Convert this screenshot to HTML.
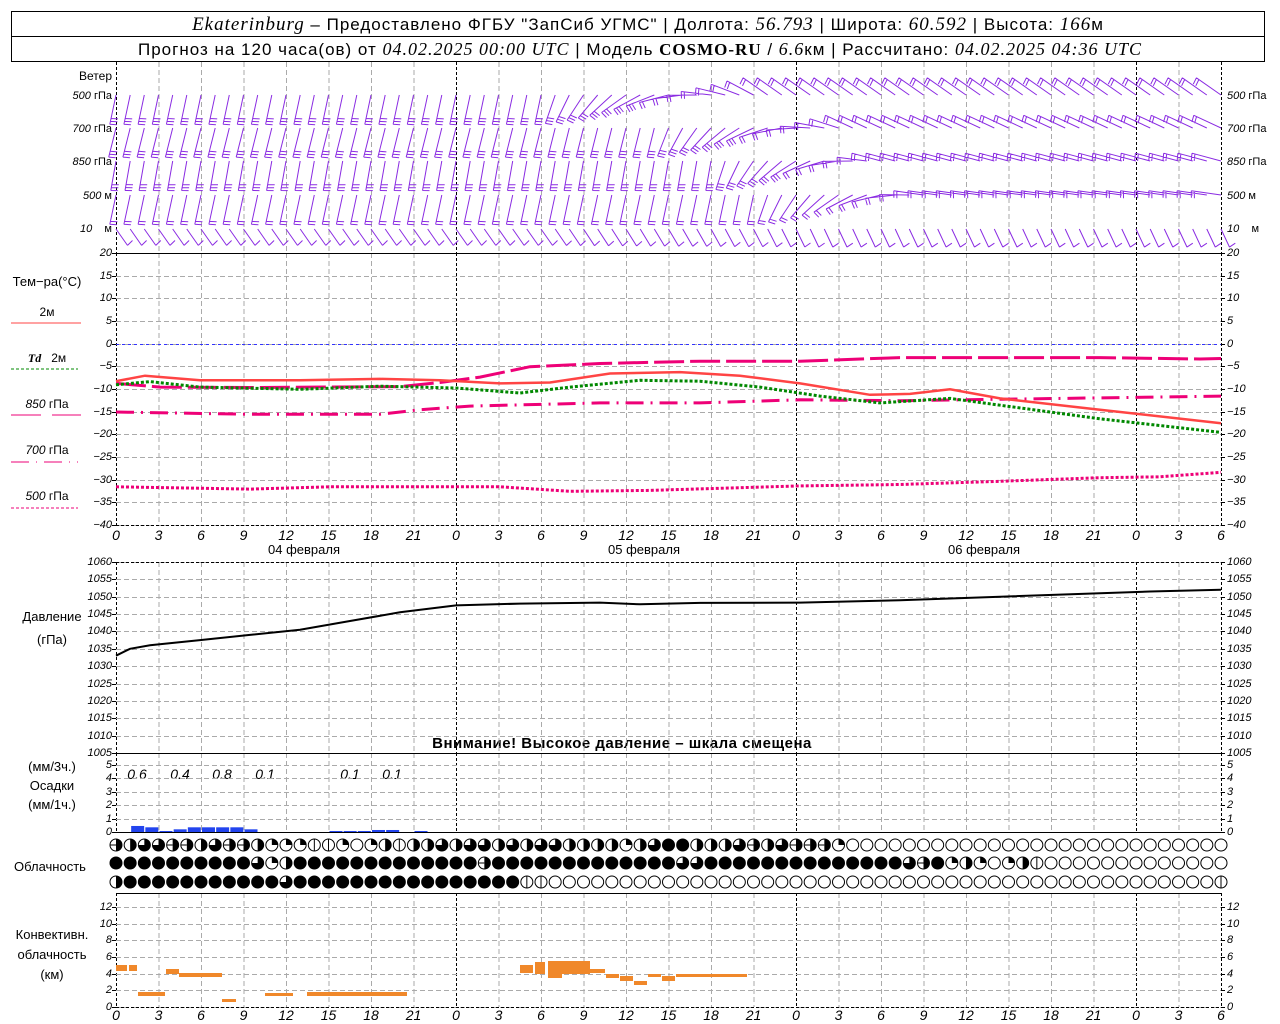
<!DOCTYPE html>
<html><head><meta charset="utf-8"><style>
html,body{margin:0;padding:0;background:#fff;width:1280px;height:1024px;overflow:hidden}
svg{display:block}
text{font-family:"Liberation Sans","DejaVu Sans",sans-serif;fill:#000}
.n{font-size:11px;font-style:italic}
.h{font-size:14px;font-style:italic}
.l{font-size:11px}
.hd{font-size:17px}
.it{font-style:italic;font-family:"Liberation Serif",serif}
</style></head><body>
<svg id="s" width="1280" height="1024" viewBox="0 0 1280 1024" xmlns="http://www.w3.org/2000/svg">
<rect x="11.5" y="11.5" width="1253" height="50" fill="none" stroke="#000"/>
<line x1="11" y1="36.5" x2="1265" y2="36.5" stroke="#000"/>
<text class="hd" x="648" y="30" text-anchor="middle" letter-spacing="1"><tspan class="it" font-size="19">Ekaterinburg</tspan> – Предоставлено ФГБУ "ЗапСиб УГМС" | Долгота: <tspan class="it" font-size="19">56.793</tspan> | Широта: <tspan class="it" font-size="19">60.592</tspan> | Высота: <tspan class="it" font-size="19">166</tspan>м</text>
<text class="hd" x="640" y="55" text-anchor="middle" font-size="16" letter-spacing="1">Прогноз на 120 часа(ов) от <tspan class="it" font-size="18">04.02.2025 00:00 UTC</tspan> | Модель <tspan font-weight="bold" font-family="Liberation Serif">COSMO-RU</tspan> / <tspan class="it" font-size="18">6.6</tspan>км | Рассчитано: <tspan class="it" font-size="18">04.02.2025 04:36 UTC</tspan></text>

<g class="l" text-anchor="end">
<text x="112" y="80" font-size="12">Ветер</text>
<text x="112" y="99"><tspan font-style="italic">500</tspan> гПа</text>
<text x="112" y="132"><tspan font-style="italic">700</tspan> гПа</text>
<text x="112" y="165"><tspan font-style="italic">850</tspan> гПа</text>
<text x="112" y="199"><tspan font-style="italic">500</tspan> м</text>
<text x="112" y="232"><tspan font-style="italic">10</tspan>&#160;&#160;&#160; м</text>
</g>
<g class="l">
<text x="1227" y="99"><tspan font-style="italic">500</tspan> гПа</text>
<text x="1227" y="132"><tspan font-style="italic">700</tspan> гПа</text>
<text x="1227" y="165"><tspan font-style="italic">850</tspan> гПа</text>
<text x="1227" y="199"><tspan font-style="italic">500</tspan> м</text>
<text x="1227" y="232"><tspan font-style="italic">10</tspan>&#160;&#160;&#160; м</text>
</g>
<g text-anchor="middle" font-size="13">
<text x="47" y="286">Тем−ра(°C)</text>
<text x="47" y="316" font-size="12">2м</text>
<text x="47" y="362" font-size="12"><tspan font-style="italic" font-weight="bold" font-family="Liberation Serif">Td</tspan>&#160;&#160; 2м</text>
<text x="47" y="408" font-size="12"><tspan font-style="italic">850</tspan> гПа</text>
<text x="47" y="454" font-size="12"><tspan font-style="italic">700</tspan> гПа</text>
<text x="47" y="500" font-size="12"><tspan font-style="italic">500</tspan> гПа</text>
<text x="52" y="621">Давление</text>
<text x="52" y="644">(гПа)</text>
<text x="52" y="771">(мм/3ч.)</text>
<text x="52" y="790">Осадки</text>
<text x="52" y="809">(мм/1ч.)</text>
<text x="50" y="871">Облачность</text>
<text x="52" y="939">Конвективн.</text>
<text x="52" y="959">облачность</text>
<text x="52" y="979">(км)</text>
<text x="304" y="554">04 февраля</text>
<text x="644" y="554">05 февраля</text>
<text x="984" y="554">06 февраля</text>
</g>
<line x1="11" y1="323" x2="81" y2="323" stroke="#f44" stroke-width="1"/>
<line x1="11" y1="369" x2="78" y2="369" stroke="#080" stroke-dasharray="3,2"/>
<line x1="11" y1="415" x2="41" y2="415" stroke="#e07"/><line x1="52" y1="415" x2="81" y2="415" stroke="#e07"/>
<line x1="11" y1="462" x2="78" y2="462" stroke="#e07" stroke-dasharray="18,7,1,7"/>
<line x1="11" y1="508" x2="78" y2="508" stroke="#e07" stroke-dasharray="3,2"/>
<text x="622" y="748" text-anchor="middle" font-size="15" font-weight="bold" letter-spacing="0.5">Внимание! Высокое давление – шкала смещена</text>
<g class="h" text-anchor="middle">
<text x="137" y="779">0.6</text><text x="180" y="779">0.4</text><text x="222" y="779">0.8</text><text x="265" y="779">0.1</text><text x="350" y="779">0.1</text><text x="392" y="779">0.1</text>
</g>
<g class="h" text-anchor="middle">
<text x="116" y="540">0</text><text x="158.5" y="540">3</text><text x="201" y="540">6</text><text x="243.5" y="540">9</text><text x="286" y="540">12</text><text x="328.5" y="540">15</text><text x="371" y="540">18</text><text x="413.5" y="540">21</text><text x="456" y="540">0</text><text x="498.5" y="540">3</text><text x="541" y="540">6</text><text x="583.5" y="540">9</text><text x="626" y="540">12</text><text x="668.5" y="540">15</text><text x="711" y="540">18</text><text x="753.5" y="540">21</text><text x="796" y="540">0</text><text x="838.5" y="540">3</text><text x="881" y="540">6</text><text x="923.5" y="540">9</text><text x="966" y="540">12</text><text x="1008.5" y="540">15</text><text x="1051" y="540">18</text><text x="1093.5" y="540">21</text><text x="1136" y="540">0</text><text x="1178.5" y="540">3</text><text x="1221" y="540">6</text>
<text x="116" y="1020">0</text><text x="158.5" y="1020">3</text><text x="201" y="1020">6</text><text x="243.5" y="1020">9</text><text x="286" y="1020">12</text><text x="328.5" y="1020">15</text><text x="371" y="1020">18</text><text x="413.5" y="1020">21</text><text x="456" y="1020">0</text><text x="498.5" y="1020">3</text><text x="541" y="1020">6</text><text x="583.5" y="1020">9</text><text x="626" y="1020">12</text><text x="668.5" y="1020">15</text><text x="711" y="1020">18</text><text x="753.5" y="1020">21</text><text x="796" y="1020">0</text><text x="838.5" y="1020">3</text><text x="881" y="1020">6</text><text x="923.5" y="1020">9</text><text x="966" y="1020">12</text><text x="1008.5" y="1020">15</text><text x="1051" y="1020">18</text><text x="1093.5" y="1020">21</text><text x="1136" y="1020">0</text><text x="1178.5" y="1020">3</text><text x="1221" y="1020">6</text>
</g>
<g class="n" text-anchor="end" dominant-baseline="middle">
<text x="112" y="253">20</text><text x="112" y="276">15</text><text x="112" y="298">10</text><text x="112" y="321">5</text><text x="112" y="344">0</text><text x="112" y="366">−5</text><text x="112" y="389">−10</text><text x="112" y="412">−15</text><text x="112" y="434">−20</text><text x="112" y="457">−25</text><text x="112" y="480">−30</text><text x="112" y="502">−35</text><text x="112" y="525">−40</text>
<text x="112" y="562">1060</text><text x="112" y="579">1055</text><text x="112" y="597">1050</text><text x="112" y="614">1045</text><text x="112" y="631">1040</text><text x="112" y="649">1035</text><text x="112" y="666">1030</text><text x="112" y="684">1025</text><text x="112" y="701">1020</text><text x="112" y="718">1015</text><text x="112" y="736">1010</text><text x="112" y="753">1005</text>
<text x="112" y="765">5</text><text x="112" y="778">4</text><text x="112" y="792">3</text><text x="112" y="805">2</text><text x="112" y="819">1</text><text x="112" y="832">0</text>
<text x="112" y="907">12</text><text x="112" y="924">10</text><text x="112" y="940">8</text><text x="112" y="957">6</text><text x="112" y="974">4</text><text x="112" y="990">2</text><text x="112" y="1007">0</text>
</g>
<g class="n" dominant-baseline="middle">
<text x="1227" y="253">20</text><text x="1227" y="276">15</text><text x="1227" y="298">10</text><text x="1227" y="321">5</text><text x="1227" y="344">0</text><text x="1227" y="366">−5</text><text x="1227" y="389">−10</text><text x="1227" y="412">−15</text><text x="1227" y="434">−20</text><text x="1227" y="457">−25</text><text x="1227" y="480">−30</text><text x="1227" y="502">−35</text><text x="1227" y="525">−40</text>
<text x="1227" y="562">1060</text><text x="1227" y="579">1055</text><text x="1227" y="597">1050</text><text x="1227" y="614">1045</text><text x="1227" y="631">1040</text><text x="1227" y="649">1035</text><text x="1227" y="666">1030</text><text x="1227" y="684">1025</text><text x="1227" y="701">1020</text><text x="1227" y="718">1015</text><text x="1227" y="736">1010</text><text x="1227" y="753">1005</text>
<text x="1227" y="765">5</text><text x="1227" y="778">4</text><text x="1227" y="792">3</text><text x="1227" y="805">2</text><text x="1227" y="819">1</text><text x="1227" y="832">0</text>
<text x="1227" y="907">12</text><text x="1227" y="924">10</text><text x="1227" y="940">8</text><text x="1227" y="957">6</text><text x="1227" y="974">4</text><text x="1227" y="990">2</text><text x="1227" y="1007">0</text>
</g>
<g id="g"></g>
</svg>
<script>
(function(){
var NS="http://www.w3.org/2000/svg",G=document.getElementById("g");
function el(t,a){var e=document.createElementNS(NS,t);for(var k in a)e.setAttribute(k,a[k]);G.appendChild(e);return e;}
function X(h){return 116+h*14.1667;}
function line(x1,y1,x2,y2,st,w,da){var a={x1:x1,y1:y1,x2:x2,y2:y2,stroke:st,"stroke-width":w||1};if(da)a["stroke-dasharray"]=da;return el("line",a);}
var GR="#aaa",DA="5,3";
for(var k=0;k<=26;k++){var x=X(3*k)+0.5,day=(k%8==0)||k==26;
 var sp=[[62,253],[253,525],[562,753],[753,832],[893,1007]];
 sp.forEach(function(s){line(x,s[0],x,s[1],day?"#000":GR,1,day?"3,2":DA);});
}
function hg(y0,y1,n){for(var i=0;i<=n;i++){var y=Math.round(y0+(y1-y0)*i/n)+0.5;line(116,y,1221,y,GR,1,DA);line(112,y,116,y,"#000");line(1221,y,1225,y,"#000");}}
hg(253,525,12);hg(562,753,11);hg(765,832,5);hg(907,1007,6);
line(116,344.5,1221,344.5,"#33f",1,"3,3");
line(116,253.5,1221,253.5,"#000");line(116,525.5,1221,525.5,"#000",1,"3,2");
line(116,562.5,1221,562.5,"#000",1,"3,2");line(116,753.5,1221,753.5,"#000");
line(116,832.5,1221,832.5,"#000");line(116,893.5,1221,893.5,"#000");line(116,1007.5,1221,1007.5,"#000",1,"3,2");
function curve(pts,fy,col,w,da){var d="";pts.forEach(function(p,i){d+=(i?"L":"M")+p[0]+","+fy(p[1]);});var a={d:d,fill:"none",stroke:col,"stroke-width":w};if(da)a["stroke-dasharray"]=da;el("path",a);}
function TY(v){return (344-v*4.533).toFixed(1);}
curve([[116,-31.5],[250,-32],[330,-31.5],[500,-31.5],[570,-32.5],[650,-32.3],[800,-31.3],[900,-31],[1000,-30.3],[1100,-29.5],[1160,-29.3],[1221,-28.3]],TY,"#e07",3,"3,2");
curve([[116,-15],[250,-15.5],[380,-15.5],[420,-14.5],[470,-13.7],[600,-13],[700,-13],[800,-12.3],[900,-12.5],[1000,-12.2],[1221,-11.5]],TY,"#e07",3,"18,7,2,7");
curve([[116,-8.7],[160,-9.5],[250,-9.6],[400,-9.4],[440,-8.5],[480,-7.3],[530,-5],[600,-4.3],[700,-3.8],[800,-3.8],[900,-3],[1000,-3],[1100,-3],[1200,-3.3],[1221,-3.2]],TY,"#e07",3,"30,6");
curve([[116,-9],[150,-8.3],[200,-9.5],[300,-10],[380,-9.3],[456,-9.7],[520,-10.8],[570,-9.5],[640,-8],[700,-8.2],[760,-9.5],[820,-11.5],[880,-13],[950,-12],[1000,-13.5],[1100,-16.5],[1221,-19.5]],TY,"#080",3,"3,2");
curve([[116,-8.2],[145,-7],[200,-8],[300,-8],[380,-7.7],[440,-8],[500,-8.7],[550,-8.5],[610,-6.5],[680,-6.2],[740,-7],[800,-8.7],[870,-11.2],[910,-11],[950,-10],[1000,-12],[1100,-14.5],[1221,-17.5]],TY,"#f44",2.5);
function PY(p){return (562+(1060-p)*3.47).toFixed(1);}
curve([[116,1033],[130,1035],[150,1036],[200,1037.5],[250,1039],[300,1040.5],[350,1043],[400,1045.5],[456,1047.5],[520,1048],[600,1048.3],[640,1047.8],[700,1048.2],[800,1048.3],[900,1049],[1000,1050],[1100,1051],[1150,1051.5],[1221,1052]],PY,"#000",2);
[[1,.45],[2,.35],[3,.05],[4,.2],[5,.35],[6,.35],[7,.35],[8,.35],[9,.2],[15,.05],[16,.05],[17,.05],[18,.15],[19,.15],[21,.05]].forEach(function(b){var h=Math.max(1,b[1]*13.4);el("rect",{x:X(b[0])+1,y:832-h,width:13,height:h,fill:"#2244ee"});});
var OR="#f0882a";
function cb(x1,x2,y1,y2){el("rect",{x:x1,y:y1,width:x2-x1,height:y2-y1,fill:OR});}
cb(116,127,965,971);cb(129,137,965,971);cb(138,165,992,996);cb(166,179,969,974);cb(179,222,973,977);cb(222,236,999,1002);cb(265,293,993,996);cb(307,407,992,996);
cb(520,533,965,973);cb(535,545,962,974);cb(548,590,961,974);cb(548,562,974,978);cb(590,605,969,973);cb(606,619,974,978);cb(620,633,976,981);cb(634,647,981,985);cb(648,661,974,977);cb(662,675,976,981);cb(676,747,974,977);
var r1="546655465542221120241446466464664444246884446546555200",r2="888888888862488888888888885888888888888866888888888888886582420241",r3="488888888888688888888888888881100";
function code(s,i){return i<s.length?+s[i]:0;}
function circ(cx,cy,c){var r=6;el("circle",{cx:cx,cy:cy,r:r,fill:c==8?"#000":"#fff",stroke:"#000","stroke-width":1});
 if(c==4||c==5)el("path",{d:"M"+cx+","+(cy-r)+"A"+r+","+r+" 0 0 1 "+cx+","+(cy+r)+"Z",fill:"#000"});
 if(c==6)el("path",{d:"M"+cx+","+cy+"L"+cx+","+(cy-r)+"A"+r+","+r+" 0 1 1 "+(cx-r)+","+cy+"Z",fill:"#000"});
 if(c==2)el("path",{d:"M"+cx+","+cy+"L"+cx+","+(cy-r)+"A"+r+","+r+" 0 0 1 "+(cx+r)+","+cy+"Z",fill:"#000"});
 if(c==1)line(cx,cy-r,cx,cy+r,"#000");
 if(c==5)line(cx-r,cy,cx,cy,"#000");
}
for(var i=0;i<=78;i++){var cx=X(i);circ(cx,845,code(r1,i));circ(cx,863,code(r2,i));circ(cx,882,i==78?1:code(r3,i));}
var PU="#8a2be2";
var L=[{y:95,len:30,t0:-12,t1:-125,ha:30,hb:46,n:3},{y:128,len:30,t0:-14,t1:-115,ha:38,hb:52,n:3},{y:161,len:30,t0:-10,t1:-105,ha:42,hb:54,n:3},{y:195,len:30,t0:-12,t1:-98,ha:45,hb:57,n:2},{y:229,len:20,t0:35,t1:25,ha:30,hb:50,n:1}];
L.forEach(function(p){var d="";for(var i=0;i<=78;i++){var f=Math.min(1,Math.max(0,(i-p.ha)/(p.hb-p.ha)));var t=(p.t0+(p.t1-p.t0)*f)*Math.PI/180;
 var sx=X(i),sy=p.y,dx=Math.sin(t),dy=Math.cos(t),tx=sx+p.len*dx,ty=sy+p.len*dy;
 d+="M"+sx.toFixed(1)+","+sy+"L"+tx.toFixed(1)+","+ty.toFixed(1);
 var fa=t+Math.PI*0.55,fx=Math.sin(fa),fy=Math.cos(fa);
 var nn=f>0.5&&p.n>2?2:p.n;
 for(var k=0;k<nn;k++){var bx=tx-k*3*dx,by=ty-k*3*dy;d+="M"+bx.toFixed(1)+","+by.toFixed(1)+"l"+(7*fx).toFixed(1)+","+(7*fy).toFixed(1);}
 }el("path",{d:d,fill:"none",stroke:PU,"stroke-width":1});});
})();
</script>
</body></html>
